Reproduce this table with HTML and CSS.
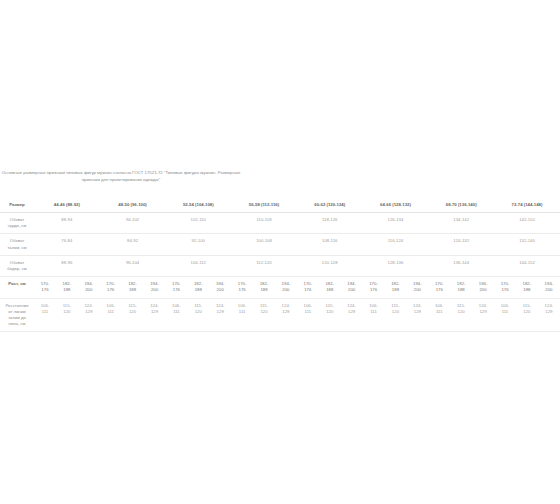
FILE: index.html
```html
<!DOCTYPE html>
<html lang="ru">
<head>
<meta charset="utf-8">
<title>Размерные признаки</title>
<link rel="stylesheet" href="styles.css">
</head>
<body>
<div class="page">
  <div class="caption">Основные размерные признаки типовых фигур мужчин согласно ГОСТ 17521-72 "Типовые фигуры мужчин. Размерные признаки для проектирования одежды"</div>
  <table class="sizes">
    <colgroup>
      <col class="c-label">
      <col span="24">
    </colgroup>
    <thead>
      <tr class="head">
        <th>Размер</th>
        <th colspan="3">44-46 (88-92)</th>
        <th colspan="3">48-50 (96-100)</th>
        <th colspan="3">52-54 (104-108)</th>
        <th colspan="3">56-58 (112-116)</th>
        <th colspan="3">60-62 (120-124)</th>
        <th colspan="3">64-66 (128-132)</th>
        <th colspan="3">68-70 (136-140)</th>
        <th colspan="3">72-74 (144-148)</th>
      </tr>
    </thead>
    <tbody>
      <tr>
        <td class="label">Обхват груди, см</td>
        <td colspan="3">88-94</td><td colspan="3">94-102</td><td colspan="3">102-110</td><td colspan="3">110-118</td>
        <td colspan="3">118-126</td><td colspan="3">126-134</td><td colspan="3">134-142</td><td colspan="3">142-150</td>
      </tr>
      <tr>
        <td class="label">Обхват талии, см</td>
        <td colspan="3">76-84</td><td colspan="3">84-92</td><td colspan="3">92-100</td><td colspan="3">100-108</td>
        <td colspan="3">108-116</td><td colspan="3">116-124</td><td colspan="3">124-132</td><td colspan="3">132-140</td>
      </tr>
      <tr>
        <td class="label">Обхват бедер, см</td>
        <td colspan="3">88-96</td><td colspan="3">96-104</td><td colspan="3">104-112</td><td colspan="3">112-120</td>
        <td colspan="3">120-128</td><td colspan="3">128-136</td><td colspan="3">136-144</td><td colspan="3">144-152</td>
      </tr>
      <tr class="height">
        <td class="label strong">Рост, см</td>
        <td>170-176</td><td>182-188</td><td>194-200</td>
        <td>170-176</td><td>182-188</td><td>194-200</td>
        <td>170-176</td><td>182-188</td><td>194-200</td>
        <td>170-176</td><td>182-188</td><td>194-200</td>
        <td>170-176</td><td>182-188</td><td>194-200</td>
        <td>170-176</td><td>182-188</td><td>194-200</td>
        <td>170-176</td><td>182-188</td><td>194-200</td>
        <td>170-176</td><td>182-188</td><td>194-200</td>
      </tr>
      <tr>
        <td class="label">Расстояние от линии талии до пола, см</td>
        <td>106-111</td><td>115-120</td><td>124-129</td>
        <td>106-111</td><td>115-120</td><td>124-129</td>
        <td>106-111</td><td>115-120</td><td>124-129</td>
        <td>106-111</td><td>115-120</td><td>124-129</td>
        <td>106-111</td><td>115-120</td><td>124-129</td>
        <td>106-111</td><td>115-120</td><td>124-129</td>
        <td>106-111</td><td>115-120</td><td>124-129</td>
        <td>106-111</td><td>115-120</td><td>124-129</td>
      </tr>
    </tbody>
  </table>
</div>
</body>
</html>
```
FILE: styles.css
```css
html, body {
  margin: 0;
  padding: 0;
  background: #ffffff;
}

.page {
  padding-top: 169px;
  font-family: "Liberation Sans", Arial, sans-serif;
  color: #999;
}

.caption {
  width: 242px;
  text-align: center;
  font-size: 4.3px;
  line-height: 7.4px;
  color: #8a8a8a;
  margin-bottom: 14px;
}

.sizes {
  width: 560px;
  table-layout: fixed;
  border-collapse: collapse;
  border-spacing: 0;
  font-size: 4.3px;
  line-height: 6.2px;
}

.sizes col.c-label {
  width: 34px;
}

.sizes th,
.sizes td {
  padding: 4px;
  text-align: center;
  vertical-align: top;
  border-bottom: 1px solid #ececec;
}

.sizes th {
  font-weight: 600;
  color: #666;
}

.sizes td {
  font-weight: normal;
  color: #a0a0a0;
}

.sizes td.label {
  color: #8e8e8e;
}

.sizes td.strong {
  color: #666;
  font-weight: 600;
}

.sizes tr.height td {
  color: #777;
  font-weight: normal;
}

.sizes tr.height td.strong {
  color: #666;
  font-weight: 600;
}

.sizes tr.head th {
  border-bottom: 1px solid #e4e4e4;
}
```
